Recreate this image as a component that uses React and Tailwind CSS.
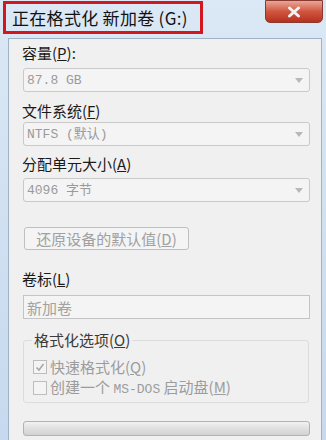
import React from 'react';

const cjk = { fontFamily: '"Noto Sans CJK SC", "Noto Sans", sans-serif' };
const mono = { fontFamily: '"Liberation Mono", "Noto Sans CJK SC", monospace' };

function Combo({ children, className = '' }) {
  return (
    <div className={`ml-[14px] mr-[11px] h-[24px] flex items-center justify-between rounded-[3px] border border-[#c9c9c9] bg-[#f4f4f4] pl-[3px] pr-[6px] ${className}`}>
      <span className="text-[13px] text-[#9a9a9a] leading-none" style={mono}>{children}</span>
      <svg width="8" height="5" viewBox="0 0 8 5"><path d="M0 0h8L4 5z" fill="#b8b8b8" /></svg>
    </div>
  );
}

function Label({ children, className = '' }) {
  return (
    <div className={`ml-[13px] text-[15px] leading-[18px] text-[#1a1a1a] ${className}`} style={cjk}>
      {children}
    </div>
  );
}

function CheckRow({ checked, children, className = '' }) {
  return (
    <div className={`flex items-center gap-[3px] h-[19px] ${className}`}>
      <div className="w-[14px] h-[14px] border border-[#bdbdbd] bg-[#f4f4f4] flex items-center justify-center">
        {checked && (
          <svg width="10" height="10" viewBox="0 0 10 10">
            <path d="M1.5 5.5l2.5 2.5 4.5-6" stroke="#a8a8a8" strokeWidth="1.6" fill="none" />
          </svg>
        )}
      </div>
      <span className="text-[15px] leading-none text-[#9c9c9c]" style={cjk}>{children}</span>
    </div>
  );
}

export default function App() {
  return (
    <div className="w-[326px] h-[440px] overflow-hidden bg-gradient-to-b from-[#dbe8f5] to-[#c6d9ee] flex flex-col">
      {/* title bar */}
      <div className="h-[38px] flex items-start justify-between shrink-0">
        <div className="mt-[1px] ml-[3px] w-[200px] h-[33px] border-[3px] border-[#d3171f] flex items-center pl-[6px]">
          <span className="text-[17px] tracking-[0.3px] text-[#111] leading-none" style={cjk}>正在格式化 新加卷 (G:)</span>
        </div>
        <div className="mr-[3px] w-[58px] h-[23px] rounded-b-[5px] border border-[#8a3a32] bg-gradient-to-b from-[#e8a698] via-[#d0553f] to-[#b7301c] flex items-center justify-center">
          <svg width="16" height="12" viewBox="0 0 16 12">
            <path d="M3.5 2l9 8M12.5 2l-9 8" stroke="#f3f3f3" strokeWidth="3" strokeLinecap="round" />
          </svg>
        </div>
      </div>
      {/* client */}
      <div className="flex-1 ml-[8px] mr-[4px] bg-[#f0f0f0] border-l border-t border-r border-[#9fb2c6] pt-[5px]">
        <Label>容量(<span className="underline">P</span>):</Label>
        <Combo className="mt-[6px]">87.8 GB</Combo>
        <Label className="mt-[10px]">文件系统(<span className="underline">F</span>)</Label>
        <Combo className="mt-[2px]">NTFS (默认)</Combo>
        <Label className="mt-[9px]">分配单元大小(<span className="underline">A</span>)</Label>
        <Combo className="mt-[5px]">4096 字节</Combo>
        <div className="mt-[25px] ml-[15px] w-[165px] h-[23px] rounded-[3px] border border-[#bfbfbf] bg-[#f4f4f4] flex items-center justify-center">
          <span className="text-[15px] leading-none text-[#a0a0a0]" style={cjk}>还原设备的默认值(<span className="underline">D</span>)</span>
        </div>
        <Label className="mt-[20px]">卷标(<span className="underline">L</span>)</Label>
        <div className="mt-[7px] ml-[14px] mr-[11px] h-[24px] border border-[#c4c4c4] bg-[#f4f4f4] flex items-center pl-[3px]">
          <span className="text-[15px] leading-none text-[#a2a2a2]" style={cjk}>新加卷</span>
        </div>
        <div className="relative mt-[21px] ml-[14px] mr-[12px] h-[63px] rounded-[3px] border border-[#dcdcdc] pt-[16px] pl-[9px]">
          <span className="absolute -top-[10px] left-[8px] px-[2px] bg-[#f0f0f0] text-[15px] leading-[18px] text-[#3a3a3a]" style={cjk}>
            格式化选项(<span className="underline">O</span>)
          </span>
          <CheckRow checked>快速格式化(<span className="underline">Q</span>)</CheckRow>
          <CheckRow className="mt-[2px]">创建一个 <span style={mono} className="text-[13px]">MS-DOS</span> 启动盘(<span className="underline">M</span>)</CheckRow>
        </div>
        <div className="mt-[18px] ml-[14px] mr-[11px] h-[15px] rounded-[3px] border border-[#b3b3b3] bg-gradient-to-b from-[#f2f2f2] via-[#e0e0e0] to-[#d2d2d2]" />
      </div>
    </div>
  );
}
